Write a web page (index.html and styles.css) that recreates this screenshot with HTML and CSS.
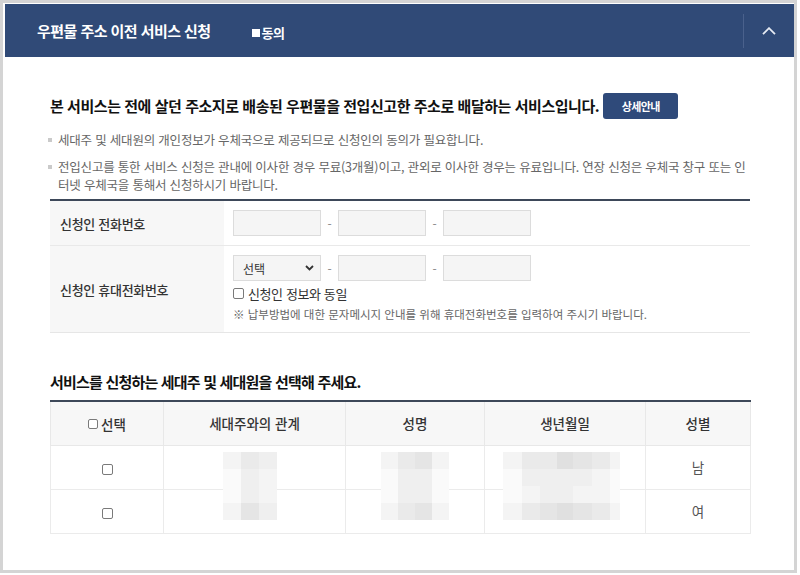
FILE: index.html
```html
<!DOCTYPE html>
<html lang="ko">
<head>
<meta charset="utf-8">
<title>우편물 주소 이전 서비스 신청</title>
<link rel="stylesheet" href="styles.css">
</head>
<body>
<div class="frame">
  <header class="bar">
    <h1 class="bar-title">우편물 주소 이전 서비스 신청</h1>
    <span class="bar-agree"><span class="sq"></span>동의</span>
    <button class="bar-toggle" type="button" aria-label="접기">
      <svg width="14" height="8" viewBox="0 0 14 8"><polyline points="1,7.2 7,1.2 13,7.2" fill="none" stroke="#e6ebf3" stroke-width="1.8"/></svg>
    </button>
  </header>
  <main class="content">
    <div class="intro">
      <h2 class="intro-title">본 서비스는 전에 살던 주소지로 배송된 우편물을 전입신고한 주소로 배달하는 서비스입니다.</h2>
      <button class="btn-detail" type="button">상세안내</button>
    </div>
    <ul class="notes">
      <li>세대주 및 세대원의 개인정보가 우체국으로 제공되므로 신청인의 동의가 필요합니다.</li>
      <li>전입신고를 통한 서비스 신청은 관내에 이사한 경우 무료(3개월)이고, 관외로 이사한 경우는 유료입니다. 연장 신청은 우체국 창구 또는 인터넷 우체국을 통해서 신청하시기 바랍니다.</li>
    </ul>
    <div class="form">
      <div class="form-row">
        <div class="form-label">신청인 전화번호</div>
        <div class="form-field">
          <div class="phone">
            <input class="inp" type="text"><span class="dash">-</span><input class="inp" type="text"><span class="dash">-</span><input class="inp" type="text">
          </div>
        </div>
      </div>
      <div class="form-row">
        <div class="form-label">신청인 휴대전화번호</div>
        <div class="form-field">
          <div class="phone">
            <div class="inp select"><span>선택</span><svg width="9" height="6" viewBox="0 0 9 6"><polyline points="1,1 4.5,4.5 8,1" fill="none" stroke="#333" stroke-width="1.8"/></svg></div><span class="dash">-</span><input class="inp" type="text"><span class="dash">-</span><input class="inp" type="text">
          </div>
          <label class="same"><input class="chk" type="checkbox">신청인 정보와 동일</label>
          <p class="help">※ 납부방법에 대한 문자메시지 안내를 위해 휴대전화번호를 입력하여 주시기 바랍니다.</p>
        </div>
      </div>
    </div>
    <h3 class="sec-title">서비스를 신청하는 세대주 및 세대원을 선택해 주세요.</h3>
    <div class="table-wrap">
      <table class="members">
        <colgroup>
          <col class="c-sel"><col class="c-rel"><col class="c-name"><col class="c-birth"><col class="c-sex">
        </colgroup>
        <thead>
          <tr>
            <th><label class="th-check"><input class="chk chk-sm" type="checkbox">선택</label></th>
            <th>세대주와의 관계</th>
            <th>성명</th>
            <th>생년월일</th>
            <th>성별</th>
          </tr>
        </thead>
        <tbody>
          <tr>
            <td><input class="chk" type="checkbox"></td>
            <td></td><td></td><td></td>
            <td>남</td>
          </tr>
          <tr>
            <td><input class="chk" type="checkbox"></td>
            <td></td><td></td><td></td>
            <td>여</td>
          </tr>
        </tbody>
      </table>
      <div class="mosaic mz-rel">
        <i class="s1"></i><i class="s3"></i><i class="s2"></i>
        <i class="s0"></i><i class="s2"></i><i class="s1"></i>
        <i class="s0"></i><i class="s2"></i><i class="s1"></i>
        <i class="s1"></i><i class="s4"></i><i class="s2"></i>
      </div>
      <div class="mosaic mz-name">
        <i class="s1"></i><i class="s3"></i><i class="s4"></i><i class="s1"></i>
        <i class="s0"></i><i class="s2"></i><i class="s2"></i><i class="s0"></i>
        <i class="s0"></i><i class="s2"></i><i class="s2"></i><i class="s0"></i>
        <i class="s1"></i><i class="s3"></i><i class="s4"></i><i class="s1"></i>
      </div>
      <div class="mosaic mz-birth">
        <i class="s1"></i><i class="s3"></i><i class="s3"></i><i class="s5"></i><i class="s4"></i><i class="s3"></i><i class="s1"></i>
        <i class="s0"></i><i class="s2"></i><i class="s2"></i><i class="s2"></i><i class="s2"></i><i class="s1"></i><i class="s0"></i>
        <i class="s0"></i><i class="s1"></i><i class="s2"></i><i class="s2"></i><i class="s1"></i><i class="s1"></i><i class="s0"></i>
        <i class="s1"></i><i class="s3"></i><i class="s4"></i><i class="s5"></i><i class="s4"></i><i class="s3"></i><i class="s1"></i>
      </div>
    </div>
  </main>
</div>
</body>
</html>
```

FILE: styles.css
```css
* { box-sizing: border-box; }

body {
  margin: 0;
  background: #fff;
  font-family: "Noto Sans CJK KR", "Noto Sans", sans-serif;
}

.frame {
  width: 797px;
  height: 573px;
  border: 3px solid #d4d4d4;
  overflow: hidden;
}

/* header bar */
.bar {
  display: flex;
  align-items: center;
  height: 53px;
  margin: 1px 0 0 2px;
  padding-left: 32px;
  background: #304a77;
  color: #fff;
}
.bar-title {
  margin: 0;
  font-size: 15px;
  font-weight: 700;
  line-height: 20px;
  letter-spacing: -0.55px;
}
.bar-agree {
  display: flex;
  align-items: center;
  margin-left: 41px;
  margin-top: 5px;
  font-size: 13px;
  font-weight: 700;
  letter-spacing: -0.6px;
  line-height: 16px;
}
.sq {
  width: 8px;
  height: 8px;
  margin-right: 2px;
  background: #fff;
}
.bar-toggle {
  margin-left: auto;
  width: 51px;
  height: 34px;
  padding: 0;
  border: 0;
  border-left: 1px solid #4a618c;
  background: transparent;
  display: flex;
  align-items: center;
  justify-content: center;
}

/* content */
.content {
  padding: 36px 44px 0 47px;
}
.intro {
  display: flex;
  align-items: center;
  height: 26px;
}
.intro-title {
  margin: 0;
  font-size: 15px;
  font-weight: 700;
  line-height: 20px;
  letter-spacing: -0.45px;
  color: #111;
}
.btn-detail {
  margin-left: 4px;
  width: 75px;
  height: 26px;
  padding: 0;
  border: 0;
  border-radius: 3px;
  background: #2f4a7a;
  color: #fff;
  font-family: "Noto Sans CJK KR", sans-serif;
  font-size: 11px;
  font-weight: 700;
  letter-spacing: -0.6px;
}

.notes {
  list-style: none;
  margin: 12px 0 0;
  padding: 0;
  font-size: 12.5px;
  line-height: 18px;
  letter-spacing: -0.2px;
  color: #666;
  word-break: break-all;
}
.notes li {
  display: flex;
  gap: 6px;
}
.notes li + li { margin-top: 9px; }
.notes li::before {
  content: "";
  flex: none;
  width: 4px;
  height: 4px;
  margin-top: 7px;
  margin-left: -2px;
  background: #cacaca;
}

/* applicant form */
.form {
  margin-top: 5px;
  border-top: 2px solid #3d4859;
  border-bottom: 1px solid #e6e6e6;
}
.form-row { display: flex; }
.form-row + .form-row { border-top: 1px solid #e9e9e9; }
.form-label {
  flex: none;
  width: 174px;
  display: flex;
  align-items: center;
  padding-left: 10px;
  background: #f7f7f7;
  font-size: 13px;
  font-weight: 500;
  letter-spacing: -0.3px;
  color: #333;
}
.form-field {
  padding: 9px 0 10px 9px;
}
.form-row:first-child .form-field { padding-bottom: 9px; }
.phone {
  display: flex;
  align-items: center;
}
.inp {
  width: 88px;
  height: 26px;
  margin: 0;
  border: 1px solid #dcdcdc;
  background: #f5f5f5;
}
.dash {
  width: 17px;
  text-align: center;
  font-size: 12px;
  color: #888;
}
.select {
  display: flex;
  align-items: center;
  justify-content: space-between;
  padding: 0 6px 0 9px;
  font-size: 12px;
  color: #333;
}
.same {
  display: flex;
  align-items: center;
  gap: 4px;
  margin-top: 4px;
  height: 16px;
  font-size: 13px;
  letter-spacing: -0.4px;
  color: #333;
}
.chk {
  appearance: none;
  -webkit-appearance: none;
  flex: none;
  margin: 0;
  width: 11px;
  height: 11px;
  border: 1px solid #7a7a7a;
  border-radius: 2px;
  background: #fff;
  vertical-align: middle;
}
.chk-sm {
  width: 10px;
  height: 10px;
}
.help {
  margin: 5px 0 0;
  font-size: 11.5px;
  line-height: 16px;
  letter-spacing: 0;
  color: #666;
}

/* members table */
.sec-title {
  margin: 39px 0 0;
  font-size: 15px;
  font-weight: 700;
  line-height: 20px;
  letter-spacing: -0.8px;
  color: #111;
}
.table-wrap {
  position: relative;
  margin-top: 8px;
}
.members {
  width: 100%;
  border-collapse: collapse;
  table-layout: fixed;
  border-top: 2px solid #3d4859;
  font-size: 13.5px;
  color: #333;
}
.c-sel { width: 113px; }
.c-rel { width: 182px; }
.c-name { width: 139px; }
.c-birth { width: 161px; }
.c-sex { width: 105px; }
.members th {
  height: 44px;
  padding: 0;
  background: #f7f7f7;
  border: 1px solid #e8e8e8;
  border-top: 0;
  font-weight: 500;
  letter-spacing: 0;
}
.members td {
  height: 44px;
  padding: 0;
  border: 1px solid #ebebeb;
  text-align: center;
  color: #555;
}
.th-check {
  display: inline-flex;
  align-items: center;
  gap: 3px;
}

/* pixelated privacy mask */
.mosaic {
  position: absolute;
  top: 52px;
  display: grid;
  grid-auto-rows: 17px;
}
.mosaic i { display: block; }
.mz-rel { left: 173px; grid-template-columns: repeat(3, 18px); }
.mz-name { left: 331px; grid-template-columns: repeat(4, 17px); }
.mz-birth { left: 453px; grid-template-columns: 19px 18px 17px 16px 19px 18px 10px; }
.s0 { background: #fafafa; }
.s1 { background: #f4f4f4; }
.s2 { background: #efefef; }
.s3 { background: #eaeaea; }
.s4 { background: #e5e5e5; }
.s5 { background: #e0e0e0; }
```
